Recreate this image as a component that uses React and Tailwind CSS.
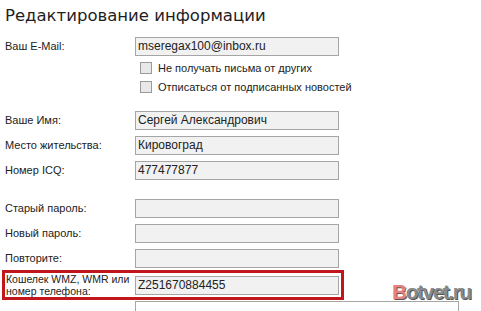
import React from 'react';

const font = { fontFamily: '"Liberation Sans", Arial, sans-serif' };

function Field({ label, value, top }) {
    return (
        <div className={`flex items-center h-[19px] ${top}`}>
            <div className="w-[130px] text-[11px] leading-[13px] text-[#222]">{label}</div>
            <div className="w-[204px] h-[19px] border border-[#a5a5a5] bg-[#f1f1f1] px-[2px] text-[12px] leading-[17px] text-[#222]">
                {value}
            </div>
        </div>
    );
}

function Check({ label, top }) {
    return (
        <div className={`flex items-center h-[12px] ${top}`}>
            <div className="ml-[135px] w-[12px] h-[12px] border border-[#9a9a9a] bg-[#e8e8e8]" />
            <span className="ml-[6px] text-[11px] leading-[12px] text-[#222]">{label}</span>
        </div>
    );
}

export default function App() {
    return (
        <div className="relative w-[481px] h-[311px] overflow-hidden bg-white" style={font}>
            <div className="pl-[5px]">
                <h1 className="pt-[4px] h-[37px] text-[16.5px] leading-[24px] text-[#1e1e1e]" style={{ fontFamily: '"DejaVu Sans", sans-serif' }}>
                    Редактирование информации
                </h1>

                <Field label="Ваш E-Mail:" value="mseregax100@inbox.ru" />
                <Check label="Не получать письма от других" top="mt-[6px]" />
                <Check label="Отписаться от подписанных новостей" top="mt-[7px]" />

                <Field label="Ваше Имя:" value="Сергей Александрович" top="mt-[18px]" />
                <Field label="Место жительства:" value="Кировоград" top="mt-[6px]" />
                <Field label="Номер ICQ:" value="477477877" top="mt-[6px]" />

                <Field label="Старый пароль:" value="" top="mt-[19px]" />
                <Field label="Новый пароль:" value="" top="mt-[6px]" />
                <Field label="Повторите:" value="" top="mt-[6px]" />
            </div>

            <div className="ml-[2px] mt-[2px] w-[342px] h-[30px] border-[3px] border-[#c0161c] flex items-center">
                <div className="w-[130px] pl-[1px] whitespace-nowrap text-[10.5px] leading-[12px] text-[#222]">
                    Кошелек WMZ, WMR или<br />номер телефона:
                </div>
                <div className="w-[204px] h-[19px] border border-[#a5a5a5] bg-[#f1f1f1] px-[2px] text-[12px] leading-[17px] text-[#222]">
                    Z251670884455
                </div>
            </div>

            <div className="ml-[135px] mt-[1px] w-[324px] h-[40px] border border-[#a5a5a5] bg-white" />

            <div className="absolute left-[392px] top-[281px] text-[21px] leading-[21px] font-bold tracking-[-1.5px] text-[#8a8a8a]"
                 style={{ textShadow: '1px 1px 0 #555, -1px -1px 0 #fff' }}>
                <span className="text-[#e88080]">B</span>otvet.ru
            </div>
        </div>
    );
}
